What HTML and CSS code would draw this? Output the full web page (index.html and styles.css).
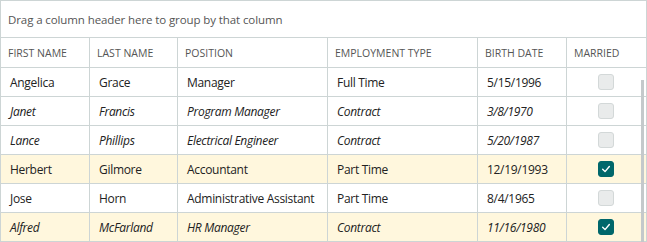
FILE: index.html
```html
<!DOCTYPE html>
<html>
<head>
<meta charset="utf-8">
<link rel="stylesheet" href="styles.css">
</head>
<body>
<div class="grid">
  <div class="group-panel">Drag a column header here to group by that column</div>
  <div class="table">
    <div class="row header">
      <div class="cell">FIRST NAME</div>
      <div class="cell">LAST NAME</div>
      <div class="cell">POSITION</div>
      <div class="cell">EMPLOYMENT TYPE</div>
      <div class="cell">BIRTH DATE</div>
      <div class="cell last">MARRIED</div>
    </div>
    <div class="row">
      <div class="cell">Angelica</div>
      <div class="cell">Grace</div>
      <div class="cell">Manager</div>
      <div class="cell">Full Time</div>
      <div class="cell">5/15/1996</div>
      <div class="cell last check-cell"><span class="cb"></span></div>
    </div>
    <div class="row italic">
      <div class="cell">Janet</div>
      <div class="cell">Francis</div>
      <div class="cell">Program Manager</div>
      <div class="cell">Contract</div>
      <div class="cell">3/8/1970</div>
      <div class="cell last check-cell"><span class="cb"></span></div>
    </div>
    <div class="row italic">
      <div class="cell">Lance</div>
      <div class="cell">Phillips</div>
      <div class="cell">Electrical Engineer</div>
      <div class="cell">Contract</div>
      <div class="cell">5/20/1987</div>
      <div class="cell last check-cell"><span class="cb"></span></div>
    </div>
    <div class="row hl">
      <div class="cell">Herbert</div>
      <div class="cell">Gilmore</div>
      <div class="cell">Accountant</div>
      <div class="cell">Part Time</div>
      <div class="cell">12/19/1993</div>
      <div class="cell last check-cell"><span class="cb on"><svg viewBox="0 0 16 16" width="16" height="16"><path d="M4.2 8.3 L6.9 11 L11.8 5.2" fill="none" stroke="#fff" stroke-width="1.6" stroke-linecap="round" stroke-linejoin="round"/></svg></span></div>
    </div>
    <div class="row">
      <div class="cell">Jose</div>
      <div class="cell">Horn</div>
      <div class="cell">Administrative Assistant</div>
      <div class="cell">Part Time</div>
      <div class="cell">8/4/1965</div>
      <div class="cell last check-cell"><span class="cb"></span></div>
    </div>
    <div class="row hl italic lastrow">
      <div class="cell">Alfred</div>
      <div class="cell">McFarland</div>
      <div class="cell">HR Manager</div>
      <div class="cell">Contract</div>
      <div class="cell">11/16/1980</div>
      <div class="cell last check-cell"><span class="cb on"><svg viewBox="0 0 16 16" width="16" height="16"><path d="M4.2 8.3 L6.9 11 L11.8 5.2" fill="none" stroke="#fff" stroke-width="1.6" stroke-linecap="round" stroke-linejoin="round"/></svg></span></div>
    </div>
    <div class="scrollbar"></div>
  </div>
</div>
</body>
</html>
```

FILE: styles.css
```css
html, body {
  margin: 0;
  padding: 0;
  background: #fff;
}
.grid {
  width: 647px;
  height: 242px;
  box-sizing: border-box;
  border: 1px solid #cdd5d5;
  border-bottom: none;
  font-family: "Open Sans", "Noto Sans", sans-serif;
  color: #222;
  display: flex;
  flex-direction: column;
  overflow: hidden;
}
.group-panel {
  flex: 0 0 auto;
  box-sizing: border-box;
  height: 37px;
  border-bottom: 1px solid #cdd5d5;
  display: flex;
  align-items: center;
  padding-left: 7px;
  padding-top: 1px;
  font-size: 11.5px;
  letter-spacing: -0.1px;
  color: #555;
}
.table {
  flex: 0 0 auto;
  position: relative;
  display: flex;
  flex-direction: column;
}
.row {
  flex: 0 0 auto;
  box-sizing: border-box;
  display: grid;
  grid-template-columns: 89px 88px 150px 150px 89px 1fr;
  height: 29px;
  border-bottom: 1px solid #cdd5d5;
  font-size: 12px;
  letter-spacing: -0.3px;
}
.row.header {
  height: 30px;
  font-size: 10.5px;
  letter-spacing: 0;
  color: #555;
}
.row.hl {
  background: #fff7dd;
}
.row.italic {
  font-style: italic;
}
.cell {
  border-right: 1px solid #cdd5d5;
  display: flex;
  align-items: center;
  padding-left: 7px;
  white-space: nowrap;
  overflow: hidden;
}
.row:not(.header) .cell {
  padding-left: 9px;
}
.cell.last {
  border-right: none;
}
.row:not(.header) .check-cell {
  justify-content: flex-start;
  padding-left: 31px;
}
.cb {
  box-sizing: border-box;
  width: 16px;
  height: 16px;
  border: 1px solid #d3d8d8;
  background: #e9ebeb;
  border-radius: 3px;
  display: flex;
  align-items: center;
  justify-content: center;
}
.cb.on {
  background: #00676b;
  border-color: #00676b;
}
.cb svg {
  display: block;
}
.scrollbar {
  position: absolute;
  right: 2px;
  top: 42px;
  bottom: 0;
  width: 3px;
  background: #c4c9cb;
}
```
